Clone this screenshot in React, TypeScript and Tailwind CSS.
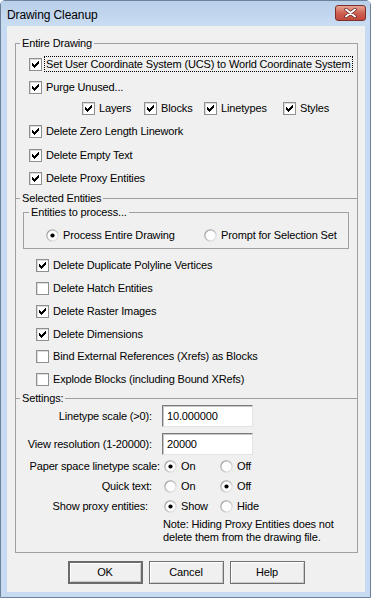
import clsx from "clsx";

function Check({ on }: { on?: boolean }) {
  return (
    <span className="flex h-[13px] w-[13px] shrink-0 items-center justify-center border border-[#8e8f8f] bg-white shadow-[inset_1px_1px_0_#dcdcdc]">
      {on && (
        <svg width="7" height="7" viewBox="0 0 7 7" shapeRendering="crispEdges">
          <path
            fill="#000"
            d="M0 2h1v3H0zM1 3h1v3H1zM2 4h1v3H2zM3 3h1v3H3zM4 2h1v3H4zM5 1h1v3H5zM6 0h1v3H6z"
          />
        </svg>
      )}
    </span>
  );
}

function Radio({ on }: { on?: boolean }) {
  return (
    <svg width="13" height="13" viewBox="0 0 13 13" className="shrink-0">
      <defs>
        <linearGradient id="ring" x1="0" y1="0" x2="1" y2="1">
          <stop offset="0" stopColor="#8a8a8a" />
          <stop offset="1" stopColor="#f4f4f4" />
        </linearGradient>
      </defs>
      <circle cx="6.5" cy="6.5" r="6.2" fill="url(#ring)" />
      <circle cx="6.5" cy="6.5" r="5" fill="#fdfdfd" />
      {on && <circle cx="6.5" cy="6.5" r="2.1" fill="#000" />}
    </svg>
  );
}

function CheckRow({
  on,
  label,
  focus,
  className,
}: {
  on?: boolean;
  label: string;
  focus?: boolean;
  className?: string;
}) {
  return (
    <div className={clsx("flex h-[16px] items-center", className)}>
      <Check on={on} />
      <span
        className={clsx(
          "ml-[2px] whitespace-nowrap border px-[1px] leading-[14px]",
          focus ? "border-dotted border-black" : "border-transparent"
        )}
      >
        {label}
      </span>
    </div>
  );
}

function RadioItem({ on, label, className }: { on?: boolean; label: string; className?: string }) {
  return (
    <div className={clsx("flex h-[16px] items-center", className)}>
      <Radio on={on} />
      <span className="ml-[4px] whitespace-nowrap leading-[14px]">{label}</span>
    </div>
  );
}

function Legend({ children, className }: { children: string; className?: string }) {
  return (
    <span className={clsx("-mt-[8px] block w-fit bg-[#f0f0f0] px-[2px] leading-[14px]", className ?? "ml-[4px]")}>
      {children}
    </span>
  );
}

function Field({ value }: { value: string }) {
  return (
    <input
      readOnly
      value={value}
      className="h-[22px] w-[91px] border border-[#7a7a7a] border-b-[#e3e3e3] border-r-[#e3e3e3] bg-white pl-[4px] text-black shadow-[inset_1px_1px_0_#c8c8c8] outline-none"
    />
  );
}

function Btn({ label, primary }: { label: string; primary?: boolean }) {
  return (
    <button
      className={clsx(
        "flex h-[23px] w-[75px] items-center justify-center bg-[#f0f0f0] shadow-[inset_1px_1px_0_#ffffff,inset_-1px_-1px_0_#c8c8c8]",
        primary ? "border-2 border-[#6b6b6b]" : "border border-[#707070]"
      )}
    >
      {label}
    </button>
  );
}

export default function App() {
  return (
    <div className="flex h-[598px] w-[371px] flex-col rounded-t-[5px] border border-[#6d819b] bg-[#c6daf1] font-['Liberation_Sans',Arial,sans-serif] text-[11px] tracking-[-0.15px] text-black">
      <div className="flex h-[25px] shrink-0 items-center justify-between bg-gradient-to-b from-[#b9d0ea] to-[#c9dcf2] pl-[6px] pr-[4px] pt-[2px]">
        <span className="text-[12px] tracking-[-0.1px]">Drawing Cleanup</span>
        <div className="mb-[4px] flex h-[16px] w-[31px] items-center justify-center rounded-[3px] border border-[#7c2f2a] bg-gradient-to-b from-[#e8a595] via-[#cf6253] to-[#c2463b]">
          <svg width="13" height="10" viewBox="0 0 13 10">
            <path d="M2 1.5l9 7M11 1.5l-9 7" stroke="#5a2420" strokeWidth="3.4" strokeLinecap="round" />
            <path d="M2 1.5l9 7M11 1.5l-9 7" stroke="#ffffff" strokeWidth="2" strokeLinecap="round" />
          </svg>
        </div>
      </div>

      <div className="ml-[6px] flex h-[566px] w-[358px] flex-col bg-[#f0f0f0]">
        <div className="ml-[8px] mt-[17px] w-[343px] border-x border-b border-[#a0a0a0]">
          {/* Entire Drawing */}
          <div className="border-t border-[#a0a0a0] pb-[12px] pl-[13px]">
            <Legend className="-ml-[9px]">Entire Drawing</Legend>
            <CheckRow on focus className="mt-[6px]" label="Set User Coordinate System (UCS) to World Coordinate System" />
            <CheckRow on className="mt-[7px]" label="Purge Unused..." />
            <div className="ml-[53px] mt-[5px] flex">
              <CheckRow on className="w-[62px]" label="Layers" />
              <CheckRow on className="w-[60px]" label="Blocks" />
              <CheckRow on className="w-[79px]" label="Linetypes" />
              <CheckRow on label="Styles" />
            </div>
            <CheckRow on className="mt-[7px]" label="Delete Zero Length Linework" />
            <CheckRow on className="mt-[8px]" label="Delete Empty Text" />
            <CheckRow on className="mt-[7px]" label="Delete Proxy Entities" />
          </div>

          {/* Selected Entities */}
          <div className="border-t border-[#a0a0a0] pb-[11px]">
            <Legend>Selected Entities</Legend>
            <div className="ml-[7px] mt-[7px] w-[326px] border border-[#a0a0a0] pb-[5px]">
              <Legend className="ml-[5px]">Entities to process...</Legend>
              <div className="mt-[8px] flex pl-[22px]">
                <RadioItem on className="w-[158px]" label="Process Entire Drawing" />
                <RadioItem label="Prompt for Selection Set" />
              </div>
            </div>
            <div className="pl-[20px]">
              <CheckRow on className="mt-[8px]" label="Delete Duplicate Polyline Vertices" />
              <CheckRow className="mt-[7px]" label="Delete Hatch Entities" />
              <CheckRow on className="mt-[7px]" label="Delete Raster Images" />
              <CheckRow on className="mt-[7px]" label="Delete Dimensions" />
              <CheckRow className="mt-[6px]" label="Bind External References (Xrefs) as Blocks" />
              <CheckRow className="mt-[7px]" label="Explode Blocks (including Bound XRefs)" />
            </div>
          </div>

          {/* Settings */}
          <div className="border-t border-[#a0a0a0] pb-[8px]">
            <Legend>Settings:</Legend>
            <div className="flex h-[22px] items-center">
              <span className="w-[146px] whitespace-nowrap pr-[10px] text-right">Linetype scale (&gt;0):</span>
              <Field value="10.000000" />
            </div>
            <div className="mt-[6px] flex h-[22px] items-center">
              <span className="w-[146px] whitespace-nowrap pr-[10px] text-right">View resolution (1-20000):</span>
              <Field value="20000" />
            </div>
            <div className="mt-[3px] flex h-[16px] items-center">
              <span className="w-[146px] whitespace-nowrap pr-[2px] text-right">Paper space linetype scale:</span>
              <div className="flex pl-[2px]">
                <RadioItem on className="w-[56px]" label="On" />
                <RadioItem label="Off" />
              </div>
            </div>
            <div className="mt-[4px] flex h-[16px] items-center">
              <span className="w-[146px] whitespace-nowrap pr-[10px] text-right">Quick text:</span>
              <div className="flex pl-[2px]">
                <RadioItem className="w-[56px]" label="On" />
                <RadioItem on label="Off" />
              </div>
            </div>
            <div className="mt-[4px] flex h-[16px] items-center">
              <span className="w-[146px] whitespace-nowrap pr-[14px] text-right">Show proxy entities:</span>
              <div className="flex pl-[2px]">
                <RadioItem on className="w-[56px]" label="Show" />
                <RadioItem label="Hide" />
              </div>
            </div>
            <p className="ml-[147px] mt-[4px] leading-[13px]">
              Note: Hiding Proxy Entities does not
              <br />
              delete them from the drawing file.
            </p>
          </div>
        </div>

        <div className="mt-[8px] flex justify-center gap-[6px]">
          <Btn primary label="OK" />
          <Btn label="Cancel" />
          <Btn label="Help" />
        </div>
      </div>
    </div>
  );
}
